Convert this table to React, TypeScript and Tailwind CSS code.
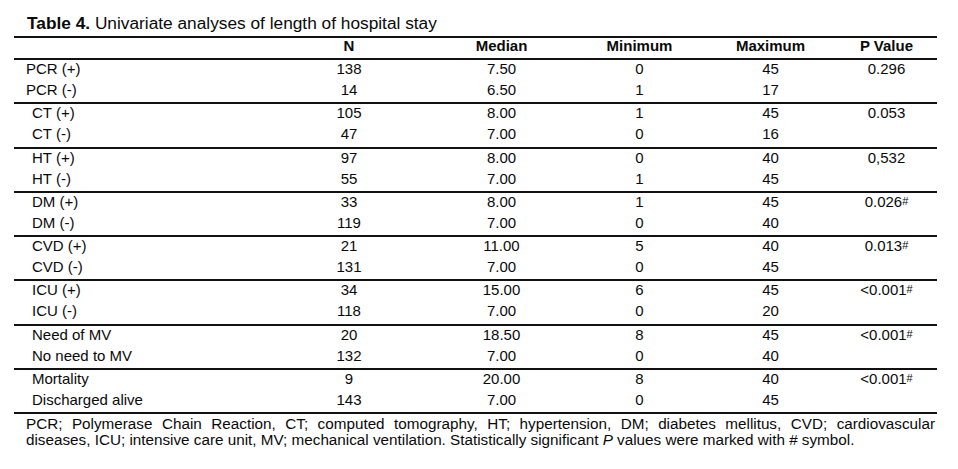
import React from "react";

type Row = {
  label: string;
  n: string;
  median: string;
  min: string;
  max: string;
  p?: string;
  sig?: boolean;
};

const groups: { indent: boolean; rows: Row[] }[] = [
  {
    indent: false,
    rows: [
      { label: "PCR (+)", n: "138", median: "7.50", min: "0", max: "45", p: "0.296" },
      { label: "PCR (-)", n: "14", median: "6.50", min: "1", max: "17" },
    ],
  },
  {
    indent: true,
    rows: [
      { label: "CT (+)", n: "105", median: "8.00", min: "1", max: "45", p: "0.053" },
      { label: "CT (-)", n: "47", median: "7.00", min: "0", max: "16" },
    ],
  },
  {
    indent: true,
    rows: [
      { label: "HT (+)", n: "97", median: "8.00", min: "0", max: "40", p: "0,532" },
      { label: "HT (-)", n: "55", median: "7.00", min: "1", max: "45" },
    ],
  },
  {
    indent: true,
    rows: [
      { label: "DM (+)", n: "33", median: "8.00", min: "1", max: "45", p: "0.026", sig: true },
      { label: "DM (-)", n: "119", median: "7.00", min: "0", max: "40" },
    ],
  },
  {
    indent: true,
    rows: [
      { label: "CVD (+)", n: "21", median: "11.00", min: "5", max: "40", p: "0.013", sig: true },
      { label: "CVD (-)", n: "131", median: "7.00", min: "0", max: "45" },
    ],
  },
  {
    indent: true,
    rows: [
      { label: "ICU (+)", n: "34", median: "15.00", min: "6", max: "45", p: "<0.001", sig: true },
      { label: "ICU (-)", n: "118", median: "7.00", min: "0", max: "20" },
    ],
  },
  {
    indent: true,
    rows: [
      { label: "Need of MV", n: "20", median: "18.50", min: "8", max: "45", p: "<0.001", sig: true },
      { label: "No need to MV", n: "132", median: "7.00", min: "0", max: "40" },
    ],
  },
  {
    indent: true,
    rows: [
      { label: "Mortality", n: "9", median: "20.00", min: "8", max: "40", p: "<0.001", sig: true },
      { label: "Discharged alive", n: "143", median: "7.00", min: "0", max: "45" },
    ],
  },
];

const cols = "grid grid-cols-[255px_160px_145px_131px_131px_101px]";

const App: React.FC = () => {
  return (
    <div
      className="w-[958px] h-[469px] bg-white text-[#0a0a0a] pt-[13px] pl-[14px]"
      style={{ fontFamily: '"Liberation Sans", Arial, sans-serif' }}
    >
      <h1 className="pl-[13px] text-[17.3px] leading-[20px] mb-[3px]">
        <span className="font-bold">Table 4.</span> Univariate analyses of length of hospital stay
      </h1>

      <div className="w-[923px] border-t-2 border-b-2 border-[#111]">
        <div className={`${cols} h-[20px] text-[15px] leading-[16px] font-bold`}>
          <div />
          <div className="text-center">N</div>
          <div className="text-center">Median</div>
          <div className="text-center">Minimum</div>
          <div className="text-center">Maximum</div>
          <div className="text-center">P Value</div>
        </div>

        {groups.map((g, gi) => (
          <div key={gi} className="border-t-2 border-[#111] h-[44.25px]">
            {g.rows.map((r, ri) => (
              <div key={ri} className={`${cols} h-[21px] text-[15px] leading-[18px]`}>
                <div className={g.indent ? "pl-[18px]" : "pl-[12px]"}>{r.label}</div>
                <div className="text-center">{r.n}</div>
                <div className="text-center">{r.median}</div>
                <div className="text-center">{r.min}</div>
                <div className="text-center">{r.max}</div>
                <div className="text-center">
                  {r.p}
                  {r.sig && <sup className="text-[11px] relative -top-[2px]">#</sup>}
                </div>
              </div>
            ))}
          </div>
        ))}
      </div>

      <div className="w-[909px] ml-[12px] mt-[2px] text-[15.25px] leading-[16px]">
        <p className="text-justify [text-align-last:justify]">
          PCR; Polymerase Chain Reaction, CT; computed tomography, HT; hypertension, DM; diabetes
          mellitus, CVD; cardiovascular
        </p>
        <p>
          diseases, ICU; intensive care unit, MV; mechanical ventilation. Statistically significant{" "}
          <i>P</i> values were marked with # symbol.
        </p>
      </div>
    </div>
  );
};

export default App;
